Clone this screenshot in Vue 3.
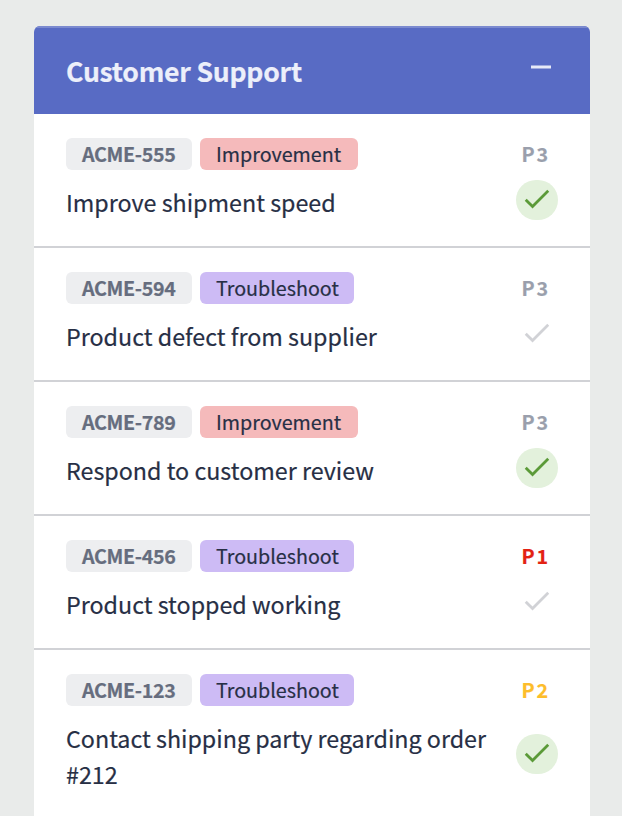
<script setup>
const tickets = [
  { id: 'ACME-555', type: 'Improvement', title: 'Improve shipment speed', priority: 'P3', done: true },
  { id: 'ACME-594', type: 'Troubleshoot', title: 'Product defect from supplier', priority: 'P3', done: false },
  { id: 'ACME-789', type: 'Improvement', title: 'Respond to customer review', priority: 'P3', done: true },
  { id: 'ACME-456', type: 'Troubleshoot', title: 'Product stopped working', priority: 'P1', done: false },
  { id: 'ACME-123', type: 'Troubleshoot', title: 'Contact shipping party regarding order #212', priority: 'P2', done: true },
]
</script>

<template>
  <main class="page">
    <section class="card">
      <header class="head">
        <h1 class="heading">Customer Support</h1>
        <button class="collapse" aria-label="Collapse">
          <svg width="20" height="4" viewBox="0 0 20 4"><rect y="0.5" width="20" height="3" fill="#e6e9f7" /></svg>
        </button>
      </header>
      <ul class="list">
        <li v-for="t in tickets" :key="t.id" class="ticket">
          <div class="meta">
            <span class="tag id">{{ t.id }}</span>
            <span class="tag" :class="t.type.toLowerCase()">{{ t.type }}</span>
            <span class="priority" :class="t.priority.toLowerCase()">{{ t.priority }}</span>
          </div>
          <div class="body">
            <p class="title">{{ t.title }}</p>
            <span class="status" :class="{ done: t.done }">
              <svg class="check" viewBox="0 0 24 24">
                <path d="M9 16.17 4.83 12l-1.42 1.41L9 19 21 7l-1.41-1.41z" fill="currentColor" />
              </svg>
            </span>
          </div>
        </li>
      </ul>
    </section>
  </main>
</template>

<style>
body {
  background: #e9ebea;
}
</style>

<style scoped>
.page {
  box-sizing: border-box;
  height: 816px;
  overflow: hidden;
  padding: 26px 32px 0 34px;
  background: #e9ebea;
  color: #272f45;
  font-family: "Noto Sans CJK SC", "Noto Sans", sans-serif;
  -webkit-text-stroke: 0.2px currentColor;
}
.card {
  overflow: hidden;
  border-radius: 6px 6px 0 0;
  background: #fff;
}
.head {
  box-sizing: border-box;
  display: flex;
  justify-content: space-between;
  height: 88px;
  padding: 0 39px 0 32px;
  border-top: 2px solid #7b8acf;
  background: #586bc4;
}
.heading {
  margin: 0;
  font-size: 26.6px;
  font-weight: 700;
  line-height: 86px;
  letter-spacing: -0.25px;
  color: #eceffa;
  white-space: nowrap;
}
.collapse {
  display: flex;
  align-self: flex-start;
  margin-top: 37px;
  padding: 0;
  border: 0;
  background: none;
}
.list {
  margin: 0;
  padding: 0;
  list-style: none;
}
.ticket {
  padding: 24px 32px;
  border-bottom: 2px solid #d1d2d6;
}
.meta {
  display: flex;
  gap: 8px;
  height: 32px;
}
.tag {
  box-sizing: border-box;
  height: 32px;
  padding-left: 16px;
  border-radius: 6px;
  font-size: 19.7px;
  line-height: 32px;
  white-space: nowrap;
}
.id {
  width: 126px;
  background: #edeef0;
  color: #666d7e;
  font-weight: 700;
  letter-spacing: -0.35px;
}
.improvement {
  width: 158px;
  background: #f5babb;
}
.troubleshoot {
  width: 154px;
  background: #cdbbf5;
}
.priority {
  width: 36.4px;
  margin-left: auto;
  font-size: 19.7px;
  font-weight: 700;
  line-height: 32px;
  letter-spacing: 1.7px;
}
.p1 {
  color: #e32213;
}
.p2 {
  color: #fdbd2b;
}
.p3 {
  color: #9a9fac;
}
.body {
  display: flex;
  align-items: center;
  justify-content: space-between;
  margin-top: 16px;
}
.title {
  width: 436px;
  margin: -2px 0 2px;
  font-size: 23.27px;
  line-height: 36px;
}
.status {
  display: flex;
  align-items: center;
  justify-content: center;
  width: 42px;
  height: 40px;
  margin: -6px 0 2px;
  border-radius: 20px;
  color: #d1d2d6;
}
.done {
  background: #e3f1dc;
  color: #5b9a38;
}
.check {
  flex: none;
  width: 33.4px;
  height: 33.4px;
  margin-bottom: 2px;
}
</style>
